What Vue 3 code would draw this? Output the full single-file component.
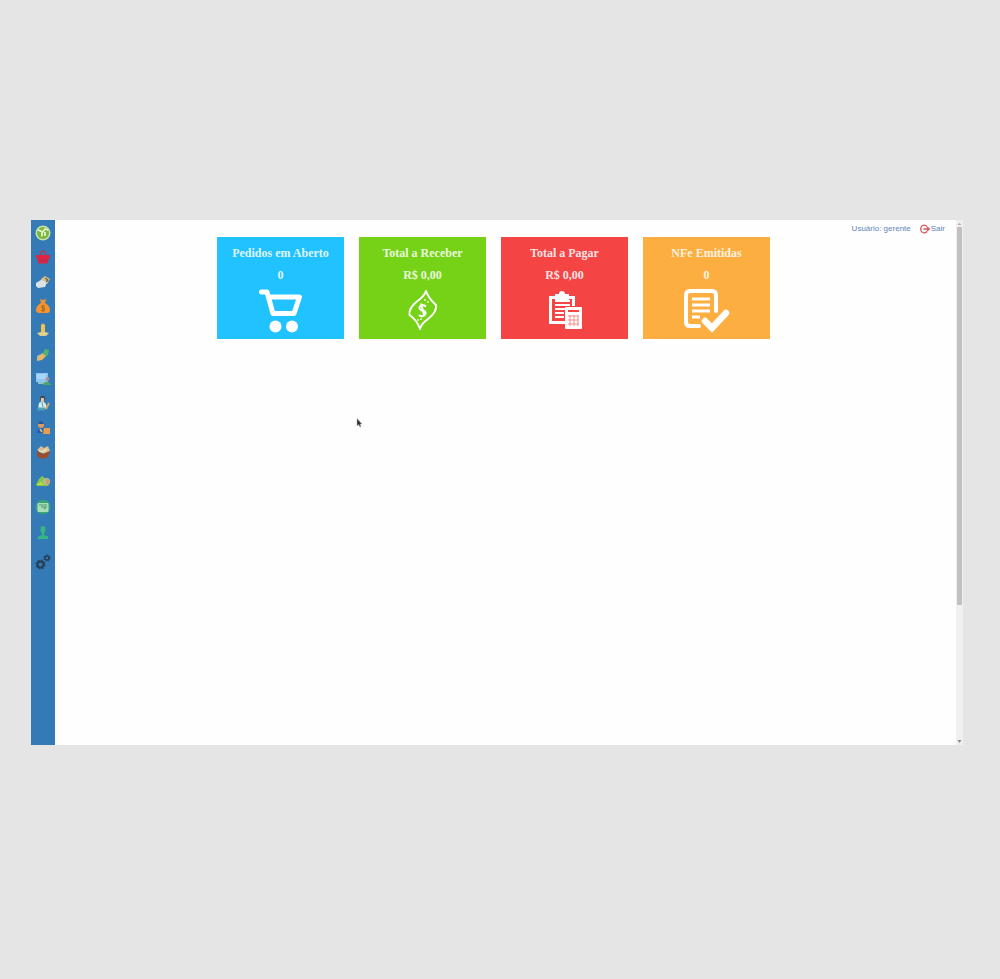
<script setup>
const cards = [
  { id: 'orders', title: 'Pedidos em Aberto', value: '0' },
  { id: 'receive', title: 'Total a Receber', value: 'R$ 0,00' },
  { id: 'pay', title: 'Total a Pagar', value: 'R$ 0,00' },
  { id: 'invoices', title: 'NFe Emitidas', value: '0' },
]
</script>

<template>
  <div class="backdrop">
    <div class="shell">
      <nav class="sidebar">
        <div class="group main-group">
          <a href="#"><svg viewBox="0 0 16 16"><circle cx="8" cy="8" r="7.500" fill="#c9dfb4" /><circle cx="8" cy="8" r="6" fill="#78ba38" /><path d="M3 5l4 1.500v5M7 8l3-4 3 1M10 7v4" fill="none" stroke="#e9f4d8" stroke-width="1.700" /></svg></a>
          <a href="#"><svg viewBox="0 0 16 16"><path d="M5.500 7V3.500Q8 .5 10.500 3.500V7" fill="none" stroke="#b03a60" stroke-width="1.400" /><path d="M1 6h14v3h-1l-1.500 5.500h-9L2 9H1z" fill="#dd2544" /><path d="M5 10v3M8 10v3M11 10v3" stroke="#a92d55" /></svg></a>
          <a href="#"><svg viewBox="0 0 16 16"><path d="M6 5l4-3 5 3-3 5-6-2z" fill="#d9c28c" /><path d="M1 9l5-3 6 2-2 5-7 1-2-2z" fill="#dce3e8" /><path d="M10 4l3 2-2 2" fill="none" stroke="#5f5c50" stroke-width="1.200" /></svg></a>
          <a href="#"><svg viewBox="0 0 16 16"><path d="M5 1l3 1 3-1-1 4q5 3 5 7 0 3-3 3H4q-3 0-3-3 0-4 5-7z" fill="#f4922b" /><path d="M10 8H7v2h2.500v2.500H6M8 7v7" fill="none" stroke="#a9672d" /></svg></a>
          <a href="#"><svg viewBox="0 0 16 16"><path d="M2 11l4-1h4l4 1-3 3H5z" fill="#d7c8a1" /><path d="M6 3q2-3 4 0v7H6z" fill="#f0c34c" /><path d="M3 11h10l-5 2z" fill="#f5d86b" /></svg></a>
          <a href="#"><svg viewBox="0 0 16 16"><path d="M8 6l2-4 4 1-1 5-4 3z" fill="#4fb276" /><path d="M2 11l5-5 4 3-4 4-5 1z" fill="#e8b467" /><path d="M2 10l3-2" stroke="#a2c5bd" stroke-width="1.500" /></svg></a>
          <a href="#"><svg viewBox="0 0 16 16"><path d="M1 2h12v9H1z" fill="#8fc5f1" /><path d="M2 3h9v5H2z" fill="#a9d5f7" /><path d="M3 11h8v2H3z" fill="#91c4c7" /><circle cx="12.500" cy="8" r="2" fill="#b58a98" /><path d="M8 13q4-5 8 0v1H8z" fill="#49a66c" /></svg></a>
          <a href="#"><svg viewBox="0 0 16 16"><path d="M5 4q0-4 4-3 2 1 1 4l-2 3z" fill="#444955" /><path d="M6 3h3v4H6z" fill="#e8c1a3" /><path d="M4 8q4-3 7 1v5H3z" fill="#d9eced" /><path d="M3 13h7v2H3zM7 7l1 5" fill="#51a5b5" stroke="#4ba3bd" /><path d="M14 8l-3 6" stroke="#d7a963" stroke-width="2" /></svg></a>
          <a href="#"><svg viewBox="0 0 16 16"><circle cx="6" cy="5" r="3" fill="#dd9b5d" /><path d="M3 4q1-4 5-2l1 2z" fill="#315496" /><path d="M2 13q0-5 5-5l2 5z" fill="#215bb5" /><path d="M9 8h6v6H8z" fill="#e99d4a" /><path d="M5 9l2 3" stroke="#efc36c" stroke-width="1.500" /></svg></a>
          <a href="#"><svg viewBox="0 0 16 16"><path d="M2 6l4-4 3 2 4-2 2 5-6 3z" fill="#d9bd91" /><path d="M1 7l7 3 7-3-2 6q-5 3-10 0z" fill="#9b4c2d" /><path d="M4 7l3 1 5-3" fill="none" stroke="#efe0be" stroke-width="1.500" /></svg></a>
        </div>
        <div class="group extra-group">
          <a href="#"><svg viewBox="0 0 16 16"><path d="M1 12l3-6 3-3 4 3 4 3-2 4H2z" fill="#83c64a" /><circle cx="11.500" cy="8.500" r="3.500" fill="#a9bf9d" /><path d="M11 6l3 1v4l-3 1z" fill="#dc9662" /><path d="M2 11l4-2 3 3H2z" fill="#b9dc3e" /></svg></a>
          <a href="#"><svg viewBox="0 0 16 16"><circle cx="8" cy="8" r="7.300" fill="#39a37b" /><rect x="2.500" y="4" width="11" height="9" rx="1" fill="#a8ddb8" /><path d="M4 6h8M6 8h5l-2 2" fill="none" stroke="#4d9c72" stroke-width="1.200" /></svg></a>
          <a href="#"><svg viewBox="0 0 16 16"><path d="M5.500 4q0-3 2.500-3t2.500 3-1.500 5v1l4 1.500V14H3v-2.500L7 10V9Q5.500 7 5.500 4z" fill="#35b683" /></svg></a>
        </div>
        <div class="group">
          <a href="#"><svg viewBox="0 0 16 16" fill="none" stroke="#263f57"><circle cx="5.500" cy="10.500" r="3" stroke-width="2" /><circle cx="5.500" cy="10.500" r="4.300" stroke-width="1.300" stroke-dasharray="1.700 1.670" /><circle cx="12" cy="4" r="2" stroke-width="1.600" /><circle cx="12" cy="4" r="3.200" stroke-width="1" stroke-dasharray="1.250 1.260" /></svg></a>
        </div>
      </nav>

      <main class="content">
        <header class="account">
          <span>Usuário: gerente</span>
          <a href="#" class="logout">
            <svg viewBox="0 0 10 10" fill="none" stroke="#dc5358" stroke-width="1.300"><path d="M7 2.500Q5 .5 2.500 1.500 .7 2.600.7 5t1.800 3.500Q5 9.500 7 7.500" /><path d="M3.500 5H9M7 3l2.200 2L7 7" /></svg>
            <span>Sair</span>
          </a>
        </header>
        <section class="cards">
          <article v-for="card in cards" :key="card.id" class="card" :class="card.id">
            <h2>{{ card.title }}</h2>
            <p>{{ card.value }}</p>
            <svg v-if="card.id === 'orders'" viewBox="0 0 46 46" fill="none" stroke="#fff">
              <path d="M3.500 3H9l6 21.500h21L41.500 8H11" stroke-width="5" stroke-linecap="round" stroke-linejoin="round" />
              <circle cx="17.500" cy="37.500" r="6" fill="#fff" stroke="none" /><circle cx="34" cy="37.500" r="6" fill="#fff" stroke="none" />
            </svg>
            <svg v-else-if="card.id === 'receive'" viewBox="0 0 46 46" fill="none" stroke="#fff" stroke-linejoin="round">
              <path d="M26 2Q29 10 36 16q1 7-8 14-7 5-8 10Q17 31 9.500 26q-1-7 8-14 7-5 8.500-10z" stroke-width="2" />
              <path d="M26 17.500q-3-2.500-5.500-.5t.5 4l3 1q3 1.500.5 4t-5.500 0M21 14.500l3.500 13" stroke-width="2" />
              <path d="M25 10v2M28 12v2M18 30v2M21 29v2" stroke-width="1.200" />
            </svg>
            <svg v-else-if="card.id === 'pay'" viewBox="0 0 46 46">
              <path d="M7 7h6V5h4q0-3 3-3t3 3h4v2h6v10h-3v-7h-3v3H13v-3h-3v22h13v3H7z" fill="#fff" />
              <path d="M13 16h15M13 20h10M13 24h9M13 28h9M13 12h15" stroke="#fff" stroke-width="2" />
              <rect x="23" y="18" width="17" height="22" rx="1" fill="#fff" />
              <path d="M26 22h11" stroke="#f44444" stroke-width="2" />
              <path d="M26 27h11M26 31h11M26 35h11M28 26v11M32 26v11M36 26v11" stroke="#f88d8d" />
            </svg>
            <svg v-else viewBox="1 1 46 46" fill="none" stroke="#fff" stroke-linecap="round" stroke-linejoin="round">
              <path d="M33 23V7q0-4-4-4H7Q3 3 3 7v27q0 4 4 4h9" stroke-width="4" />
              <path d="M9 11h18M9 17h18M9 23h18M9 29h8" stroke-width="3" stroke-linecap="butt" />
              <path d="M22 33l7 7 14-15" stroke-width="6.500" stroke-linejoin="miter" />
            </svg>
          </article>
        </section>
        <svg class="pointer" viewBox="0 0 6 10"><path d="M1 .5v7.500l1.500-1.500L4 9l1-.5-1-2.500h2z" fill="#333" stroke="#aaa" stroke-width=".5" /></svg>
      </main>

      <div class="scrollbar" aria-hidden="true">
        <svg viewBox="0 0 7 7"><path d="M1.500 5h4l-2-2z" fill="#aaa" /></svg>
        <div class="thumb"></div>
        <div class="track"></div>
        <svg viewBox="0 0 7 7"><path d="M1.500 2h4l-2 3z" fill="#888" /></svg>
      </div>
    </div>
  </div>
</template>

<style>
body {
  background: #e5e5e5;
}
</style>

<style scoped>
.backdrop {
  box-sizing: border-box;
  min-height: 100vh;
  padding: 220px 37px 40px 31px;
  background: #e5e5e5;
}
.shell {
  display: flex;
  min-height: 525px;
  background: #fefefe;
}
svg {
  display: block;
}
.sidebar {
  display: flex;
  flex-direction: column;
  flex: 0 0 24px;
  box-sizing: border-box;
  gap: 13px;
  padding-top: 5px;
  background: #337ab7;
}
.group {
  display: flex;
  flex-direction: column;
  align-items: center;
}
.main-group {
  min-height: 235px;
  justify-content: space-between;
}
.extra-group {
  gap: 10px;
}
.group svg {
  width: 16px;
  height: 16px;
}
.content {
  position: relative;
  flex: 1;
  min-width: 0;
}
.account {
  display: flex;
  align-items: center;
  justify-content: flex-end;
  gap: 9px;
  height: 17px;
  padding-right: 11px;
  font: 8px/16px "Liberation Sans", sans-serif;
  color: #6484b8;
}
.logout {
  display: flex;
  align-items: center;
  gap: 1px;
  color: #6484b8;
  text-decoration: none;
}
.logout svg {
  width: 10px;
  height: 10px;
}
.cards {
  display: grid;
  grid-template-columns: repeat(4, minmax(0, 1fr));
  gap: 15px;
  margin: 0 186px 0 162px;
}
.card {
  display: flex;
  flex-direction: column;
  align-items: center;
  box-sizing: border-box;
  min-height: 102px;
  padding: 8px 0 4px;
  color: #fff;
  font-family: "Liberation Serif", serif;
}
.card h2,
.card p {
  margin: 0 0 6px;
  font-size: 12px;
  font-weight: 700;
  line-height: 16px;
  opacity: 0.85;
}
.card svg {
  width: 46px;
  height: 46px;
}
.orders {
  background: #20c2ff;
}
.receive {
  background: #75d216;
}
.pay {
  background: #f44444;
}
.invoices {
  background: #fdae40;
}
.pointer {
  position: absolute;
  top: 198px;
  left: 301px;
  width: 6px;
  height: 10px;
}
.scrollbar {
  display: flex;
  flex-direction: column;
  flex: 0 0 7px;
  background: #f0f0f0;
}
.scrollbar svg {
  width: 7px;
  height: 7px;
}
.thumb {
  flex: 378;
  margin: 0 1px;
  background: #c1c1c1;
}
.track {
  flex: 133;
}
</style>
